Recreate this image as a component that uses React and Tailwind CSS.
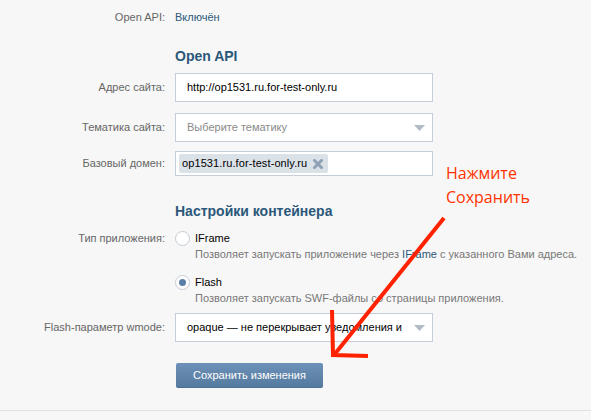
import React from "react";

const F = { fontFamily: "Tahoma, 'Liberation Sans', 'DejaVu Sans', sans-serif" };

function Label({ children }) {
  return (
    <div className="w-[165px] shrink-0 text-right text-[11px] text-[#666]">{children}</div>
  );
}

function Arrow() {
  return (
    <svg className="absolute left-0 top-0 pointer-events-none" width="591" height="420">
      <g stroke="#ff2200" strokeWidth="4" fill="none" strokeLinecap="butt" strokeLinejoin="miter">
        <line x1="444" y1="218" x2="334" y2="355" />
        <polyline points="332,310 333,355 368,356" />
      </g>
    </svg>
  );
}

function Radio({ checked }) {
  return (
    <div className="w-[15px] h-[15px] rounded-full border border-[#c3ccd6] bg-white flex items-center justify-center shrink-0">
      {checked && <div className="w-[7px] h-[7px] rounded-full bg-[#5b7fa6]" />}
    </div>
  );
}

function Caret() {
  return (
    <svg width="11" height="6" viewBox="0 0 11 6"><polygon points="0,0 11,0 5.5,6" fill="#b3bcc6" /></svg>
  );
}

export default function App() {
  return (
    <div className="relative w-[591px] h-[420px] bg-[#f7f7f7] overflow-hidden" style={F}>
      <div className="flex flex-col">
        <div className="flex items-center h-[34px] gap-[10px]">
          <Label>Open API:</Label>
          <div className="text-[11px] text-[#2b587a]">Включён</div>
        </div>
        <div className="flex items-center h-[34px] mt-[5px] pl-[175px]">
          <div className="text-[14px] font-bold text-[#2b587a]">Open API</div>
        </div>
        <div className="flex items-center gap-[10px]">
          <Label>Адрес сайта:</Label>
          <div className="w-[258px] h-[29px] border border-[#c5ced8] bg-white flex items-center pl-[11px] text-[11px] text-black">
            http://op1531.ru.for-test-only.ru
          </div>
        </div>
        <div className="flex items-center gap-[10px] mt-[11px]">
          <Label>Тематика сайта:</Label>
          <div className="w-[258px] h-[29px] border border-[#c5ced8] bg-white flex items-center justify-between pl-[11px] pr-[7px] text-[11px] text-[#8a8a8a]">
            <span>Выберите тематику</span>
            <Caret />
          </div>
        </div>
        <div className="flex items-center gap-[10px] mt-[9px]">
          <Label>Базовый домен:</Label>
          <div className="w-[258px] h-[25px] border border-[#c5ced8] bg-white flex items-center pl-[3px]">
            <div className="h-[19px] bg-[#dae2e8] rounded-[2px] flex items-center pl-[3px] pr-[5px] gap-[6px] text-[11px] tracking-[0.1px] text-black">
              <span>op1531.ru.for-test-only.ru</span>
              <svg width="10" height="10" viewBox="0 0 10 10">
                <g stroke="#8fa1b4" strokeWidth="3" strokeLinecap="square">
                  <line x1="1.5" y1="1.5" x2="8.5" y2="8.5" />
                  <line x1="8.5" y1="1.5" x2="1.5" y2="8.5" />
                </g>
              </svg>
            </div>
          </div>
        </div>
        <div className="flex items-center h-[34px] mt-[18px] pl-[175px]">
          <div className="text-[14px] font-bold text-[#2b587a]">Настройки контейнера</div>
        </div>
        <div className="flex gap-[10px] mt-[1px]">
          <div className="h-[18px] flex items-center"><Label>Тип приложения:</Label></div>
          <div className="flex flex-col">
            <div className="flex items-center gap-[5px] h-[18px]">
              <Radio />
              <span className="text-[11px] text-black">IFrame</span>
            </div>
            <div className="pl-[20px] text-[11px] text-[#777] h-[14px] leading-[14px]">
              Позволяет запускать приложение через <span className="text-[#2b587a]">IFrame</span> с указанного Вами адреса.
            </div>
            <div className="flex items-center gap-[5px] h-[18px] mt-[12px]">
              <Radio checked />
              <span className="text-[11px] text-black">Flash</span>
            </div>
            <div className="pl-[20px] text-[11px] text-[#777] h-[14px] leading-[14px]">
              Позволяет запускать SWF-файлы со страницы приложения.
            </div>
          </div>
        </div>
        <div className="flex items-center gap-[10px] mt-[8px]">
          <Label>Flash-параметр wmode:</Label>
          <div className="w-[258px] h-[29px] border border-[#c5ced8] bg-white flex items-center justify-between pl-[11px] pr-[7px] text-[11px] text-black">
            <span>opaque — не перекрывает уведомления и</span>
            <Caret />
          </div>
        </div>
        <div className="pl-[176px] mt-[21px]">
          <div className="w-[147px] h-[25px] rounded-[2px] bg-gradient-to-b from-[#6d91b8] to-[#557a9f] border-b border-[#4c6f94] flex items-center justify-center text-[11px] text-white">
            Сохранить изменения
          </div>
        </div>
        <div className="mt-[22px] h-[1px] bg-[#dde2e8]" />
      </div>
      <Arrow />
      <div
        className="absolute left-[446px] top-[161px] text-[16px] leading-[24px] text-[#ff3300]"
        style={{ fontFamily: "'Open Sans', 'Noto Sans', sans-serif" }}
      >
        Нажмите<br />Сохранить
      </div>
    </div>
  );
}
